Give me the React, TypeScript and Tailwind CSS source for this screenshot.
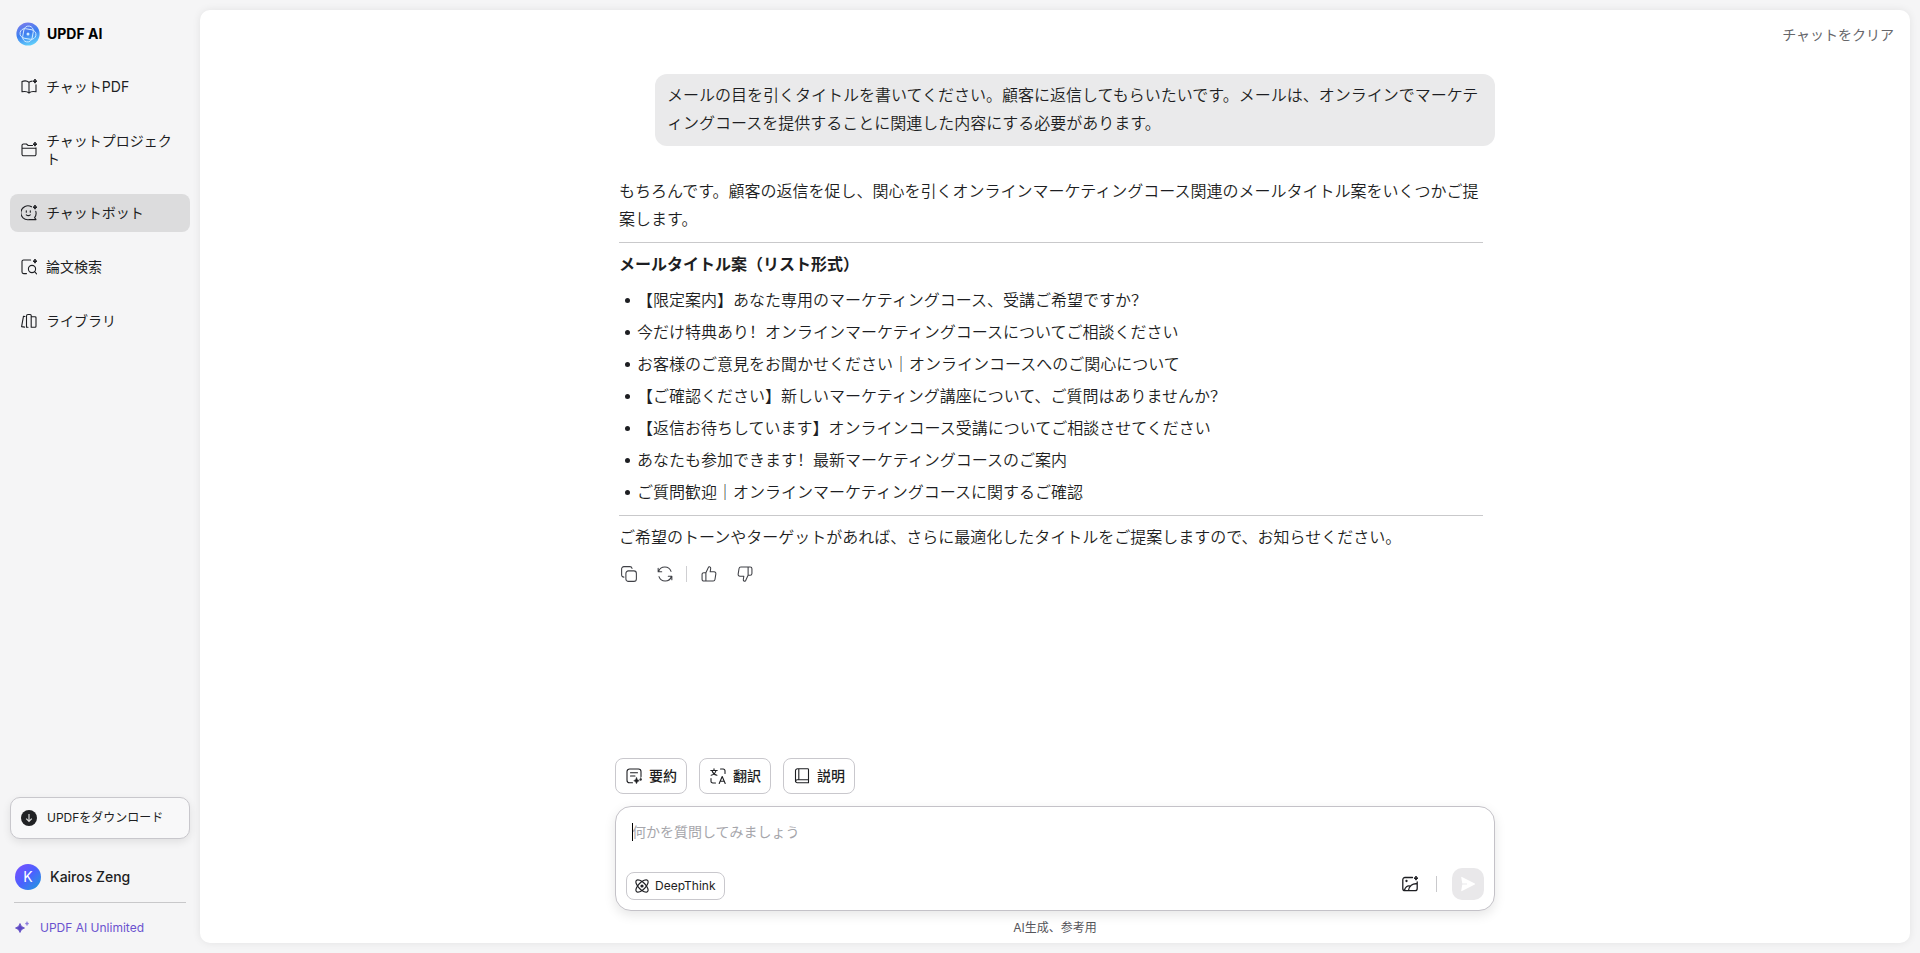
import React from "react";

type IconProps = { className?: string; children: React.ReactNode; size?: number; weight?: number };

function Icon({ className = "size-4", children, size = 16, weight = 1.1 }: IconProps) {
  return (
    <svg
      viewBox={`0 0 ${size} ${size}`}
      className={`${className} shrink-0`}
      fill="none"
      stroke="currentColor"
      strokeWidth={weight}
      strokeLinecap="round"
      strokeLinejoin="round"
      aria-hidden="true"
    >
      {children}
    </svg>
  );
}

const spark = <path d="M14 .2Q14.4 1.8 16 2.2 14.4 2.6 14 4.2 13.6 2.6 12 2.2 13.6 1.8 14 .2Z" fill="currentColor" strokeWidth=".9" />;

function Logo() {
  return (
    <svg viewBox="0 0 24 24" className="size-6 shrink-0" fill="none" aria-hidden="true">
      <defs>
        <linearGradient id="logo" x1="6" y1="0" x2="14" y2="24" gradientUnits="userSpaceOnUse">
          <stop stopColor="#7c7cec" />
          <stop offset=".5" stopColor="#3c7ff0" />
          <stop offset="1" stopColor="#63d3fb" />
        </linearGradient>
      </defs>
      <circle cx="12" cy="12" r="11.6" fill="url(#logo)" />
      <g stroke="#d5edff" strokeWidth=".9">
        <rect x="4" y="7.2" width="16" height="9.6" rx="4.8" transform="rotate(10 12 12)" />
        <rect x="4" y="7.2" width="16" height="9.6" rx="4.8" transform="rotate(100 12 12)" />
      </g>
      <circle cx="12" cy="12" r="1.5" fill="#d5edff" />
    </svg>
  );
}

const navItems = [
  {
    label: "チャットPDF",
    icon: (
      <Icon>
        <path d="M8 3.400v10.200M8 3.400C6.300 1.900 3.300 1.700 1 2.500v10.300c2.400-.5 5.300-.4 7 1.200 1.700-1.600 4.600-1.700 7-1.200V5.800M8 3.400c.9-.8 2-1.200 3.200-1.300" />
        {spark}
      </Icon>
    ),
  },
  {
    label: "チャットプロジェクト",
    icon: (
      <Icon>
        <path d="M15 5.800v6.400a1.600 1.600 0 0 1-1.600 1.600H2.600A1.600 1.600 0 0 1 1 12.200V3.600A1.600 1.600 0 0 1 2.600 2h2.800l1.800 1.500h4.300M1 6.200h14" />
        {spark}
      </Icon>
    ),
  },
  {
    label: "チャットボット",
    active: true,
    icon: (
      <Icon>
        <path d="M10.500 1.800A7 7 0 1 0 8.300 14.600H15l-1.400-2A7 7 0 0 0 14.800 6.300" />
        <path d="M5.300 5.800v1.400M9.300 5.800v1.400M5.300 9.800q2 1.700 4 0" />
        {spark}
      </Icon>
    ),
  },
  {
    label: "論文検索",
    icon: (
      <Icon>
        <path d="M5.500 14.600H2.600A1.600 1.600 0 0 1 1 13V2.600A1.600 1.600 0 0 1 2.600 1h7" />
        <circle cx="11" cy="10" r="3.600" />
        <path d="m13.600 12.700 2 2.200" />
        {spark}
      </Icon>
    ),
  },
  {
    label: "ライブラリ",
    icon: (
      <Icon>
        <path d="M4 3.500 2.500 3.200.6 13.600l3 .5M5.500 14.200V3a1.500 1.500 0 0 1 1.500-1.500h2.200a1 1 0 0 1 1 1v11.700M5.500 14.200h1.500M10.200 3.700h3.800a1 1 0 0 1 1 1v8.500a1 1 0 0 1-1 1h-3.800Z" />
      </Icon>
    ),
  },
];

const titles = [
  "【限定案内】あなた専用のマーケティングコース、受講ご希望ですか？",
  "今だけ特典あり！オンラインマーケティングコースについてご相談ください",
  "お客様のご意見をお聞かせください｜オンラインコースへのご関心について",
  "【ご確認ください】新しいマーケティング講座について、ご質問はありませんか？",
  "【返信お待ちしています】オンラインコース受講についてご相談させてください",
  "あなたも参加できます！最新マーケティングコースのご案内",
  "ご質問歓迎｜オンラインマーケティングコースに関するご確認",
];

const quickActions = [
  {
    label: "要約",
    icon: (
      <Icon>
        <path d="M6.500 14.800H3.600A2.600 2.600 0 0 1 1 12.200V3.600A2.600 2.600 0 0 1 3.600 1h8.800A2.600 2.600 0 0 1 15 3.600v5M4.500 4.800h7M4.500 8h4.500" />
        <path d="M10.500 9.500Q11 12 13.400 12.700 11 13.300 10.500 15.800 10 13.300 7.700 12.700 10 12 10.500 9.500ZM14.800 9.700l.5 1.200 1 .4-1 .4-.5 1.200-.5-1.200-1-.4 1-.4Z" fill="currentColor" strokeWidth=".4" />
      </Icon>
    ),
  },
  {
    label: "翻訳",
    icon: (
      <Icon>
        <path d="M.8 2.500h6.400M4 .8v1.700M6 2.500C5.500 4.800 3.500 6.600 1.200 7.300M2 2.500c.6 2.300 2.600 4.100 4.900 4.800M10.500 1h2.700A1.800 1.800 0 0 1 15 2.800v2.700M1 10.500v2.700A1.800 1.800 0 0 0 2.800 15h2.700M9.200 15.500 12.200 8.500l3 7M10.200 13.300h4" />
      </Icon>
    ),
  },
  {
    label: "説明",
    icon: (
      <Icon>
        <path d="M14.500 11.800V1.600a.8.800 0 0 0-.8-.8H3.500a2 2 0 0 0-2 2v10.600M4.800.8v11M14.500 11.800v3H3.200a1.500 1.500 0 0 1 0-3Z" />
      </Icon>
    ),
  },
];

function Sidebar() {
  return (
    <aside className="flex w-50 shrink-0 flex-col px-2.5">
      <div className="flex h-[68px] items-center gap-[7px] px-1.5 text-sm font-bold text-black">
        <Logo />
        <span>UPDF AI</span>
      </div>
      <nav className="flex flex-col gap-4">
        {navItems.map((item) => (
          <a
            key={item.label}
            href="#"
            aria-current={item.active ? "page" : undefined}
            className={`flex items-center gap-[9px] rounded-lg py-2.5 pr-4 pl-[11px] text-sm leading-[18px] ${item.active ? "bg-[#dcdcdd]" : ""}`}
          >
            {item.icon}
            <span>{item.label}</span>
          </a>
        ))}
      </nav>
      <div className="mt-auto flex flex-col">
        <button
          type="button"
          className="flex h-[42px] items-center gap-2.5 rounded-[10px] border border-[#c8c7cc] bg-[#f8f8f9] px-2.5 text-xs shadow-[0_3px_8px_rgba(0,0,0,0.09)]"
        >
          <svg viewBox="0 0 16 16" className="size-4" fill="none" aria-hidden="true">
            <circle cx="8" cy="8" r="8" fill="#202124" />
            <path d="M8 4v7.200M5.200 8.600 8 11.400l2.800-2.800" stroke="#dadada" strokeWidth="1.200" />
          </svg>
          <span>UPDFをダウンロード</span>
        </button>
        <div className="mx-1 mt-[25px] flex items-center gap-[9px] border-b border-[#c8c8ca] pb-3 pl-px">
          <span className="flex size-[26px] items-center justify-center rounded-full bg-linear-to-br from-[#7a4dff] via-[#4a60ff] to-[#0b9bd8] text-sm text-white">
            K
          </span>
          <span className="text-sm font-medium">Kairos Zeng</span>
        </div>
        <a href="#" className="flex h-[50px] items-center gap-[9px] pl-[5px] text-xs text-[#6a52cf]">
          <svg viewBox="0 0 16 16" className="size-4" fill="#5d48c4" aria-hidden="true">
            <path d="M5 3.500Q5.700 7 9.500 8 5.700 9 5 12.500 4.300 9 .5 8 4.300 7 5 3.500Z" stroke="#5d48c4" strokeWidth=".8" />
            <path d="M12 1.500Q12.300 3.300 14 3.600 12.300 3.900 12 5.700 11.700 3.900 10 3.600 11.700 3.300 12 1.500Z" fill="#8a78dc" stroke="#8a78dc" strokeWidth=".4" />
          </svg>
          <span>UPDF AI Unlimited</span>
        </a>
      </div>
    </aside>
  );
}

function MessageActions() {
  return (
    <div className="mt-[15px] flex items-center pl-0.5 text-[#3f4046]">
      <button type="button" aria-label="コピー">
        <Icon size={18} weight={1.2}>
          <rect x="5.500" y="5.500" width="11.800" height="11.800" rx="2.800" />
          <path d="M3.300 12.500A2.500 2.500 0 0 1 .7 10V3.200A2.500 2.500 0 0 1 3.200.7H10a2.500 2.500 0 0 1 2.400 2" />
        </Icon>
      </button>
      <button type="button" aria-label="再生成" className="ml-5">
        <Icon size={18} weight={1.2}>
          <path d="M1.300 2.500v4h4M1.800 6.200A7.400 7.400 0 0 1 15.800 6M16.700 15.500v-4h-4M16.200 11.800A7.400 7.400 0 0 1 2.200 12" />
        </Icon>
      </button>
      <span className="ml-[13px] h-4 w-px bg-[#cfcfd2]" />
      <button type="button" aria-label="高評価" className="ml-3.5">
        <Icon size={18} weight={1.2}>
          <path d="M5.500 7.500 8 2.200C8.300 1.100 9 .7 9.700.9c1 .3 1.400 1.200 1.200 2.200L10.300 6.500h4.400a2 2 0 0 1 2 2.400l-1 6.300a2 2 0 0 1-2 1.700H3.200a2 2 0 0 1-2-2V9.500a2 2 0 0 1 2-2ZM5.500 7.500v9.400" />
        </Icon>
      </button>
      <button type="button" aria-label="低評価" className="ml-5">
        <Icon size={18} weight={1.2}>
          <path d="M12.500 10.500 10 15.800c-.3 1.100-1 1.500-1.700 1.300-1-.3-1.400-1.200-1.200-2.200l.6-3.400H3.300a2 2 0 0 1-2-2.400l1-6.300a2 2 0 0 1 2-1.700h10.500a2 2 0 0 1 2 2v5.400a2 2 0 0 1-2 2ZM12.500 10.500V1.100" />
        </Icon>
      </button>
    </div>
  );
}

function Conversation() {
  return (
    <section className="min-h-0 w-full max-w-[880px] flex-1 overflow-hidden pt-3.5 text-base leading-7 font-[350]">
      <p className="ml-10 rounded-xl bg-[#eaeaeb] px-3 pt-[7px] pb-[9px]">
        メールの目を引くタイトルを書いてください。顧客に返信してもらいたいです。メールは、オンラインでマーケティングコースを提供することに関連した内容にする必要があります。
      </p>
      <article className="mt-[31px] pr-3 pl-1">
        <p>もちろんです。顧客の返信を促し、関心を引くオンラインマーケティングコース関連のメールタイトル案をいくつかご提案します。</p>
        <hr className="mt-[9px] mb-[7px] border-[#c9c9cb]" />
        <h3 className="font-bold">メールタイトル案（リスト形式）</h3>
        <ul className="mt-1.5 mb-[7px] leading-8">
          {titles.map((title) => (
            <li key={title} className="flex items-center gap-[7px] pl-1.5 before:size-[5px] before:rounded-full before:bg-[#1d1e22]">
              {title}
            </li>
          ))}
        </ul>
        <hr className="mb-[7px] border-[#c9c9cb]" />
        <p>ご希望のトーンやターゲットがあれば、さらに最適化したタイトルをご提案しますので、お知らせください。</p>
        <MessageActions />
      </article>
    </section>
  );
}

function Composer() {
  return (
    <section className="flex w-full max-w-[880px] flex-col gap-3">
      <div className="flex gap-3">
        {quickActions.map((action) => (
          <button
            key={action.label}
            type="button"
            className="flex h-9 items-center gap-[7px] rounded-lg border border-[#c9c8cd] bg-white pr-[9px] pl-2.5 text-sm font-medium"
          >
            {action.icon}
            {action.label}
          </button>
        ))}
      </div>
      <form className="rounded-2xl border border-[#c4c2c8] bg-white px-2.5 pt-4 pb-2.5 shadow-[0_4px_12px_rgba(0,0,0,0.10)]">
        <div className="relative">
          <span className="absolute top-0 left-1.5 h-[18px] w-px bg-black" />
          <textarea
            aria-label="何かを質問してみましょう"
            placeholder="何かを質問してみましょう"
            className="block h-[45px] w-full resize-none px-1.5 text-sm leading-[18px] outline-none placeholder:text-[#a6a6ab]"
          />
        </div>
        <div className="flex items-end">
          <button type="button" className="flex h-7 items-center gap-1.5 rounded-lg border border-[#c9c8cd] px-2 text-xs">
            <Icon className="size-3.5" weight={1.3}>
              <ellipse cx="8" cy="8" rx="9" ry="4" transform="rotate(45 8 8)" />
              <ellipse cx="8" cy="8" rx="9" ry="4" transform="rotate(-45 8 8)" />
              <circle cx="8" cy="8" r="1.200" fill="currentColor" />
            </Icon>
            DeepThink
          </button>
          <div className="ml-auto flex h-8 items-center">
            <button type="button" aria-label="画像を追加">
              <Icon weight={1.3}>
                <path d="M10.500 1.500H3A2.200 2.200 0 0 0 .8 3.700v8.800A2.200 2.200 0 0 0 3 14.700h10a2.200 2.200 0 0 0 2.200-2.200V5.800M2.500 14.300C3 11 5.300 9.300 8.500 10.200M6.500 14.500C7 10 10.500 7.300 15 7.800" />
                <circle cx="4.500" cy="5" r=".5" fill="currentColor" />
                {spark}
              </Icon>
            </button>
            <span className="ml-[18px] h-4 w-px bg-[#c9c9cc]" />
            <button type="submit" aria-label="送信" disabled className="ml-[15px] flex size-8 items-center justify-center rounded-[10px] bg-[#e9e8ea]">
              <svg viewBox="0 0 16 16" className="size-4" aria-hidden="true">
                <path d="M1.200 1.200Q1.200.6 2 .9L14.800 7.400q.9.600 0 1.200L2 15.100q-.8.300-.8-.3L2.300 8.600H7V7.400H2.300Z" fill="#fff" />
              </svg>
            </button>
          </div>
        </div>
      </form>
    </section>
  );
}

export default function App() {
  return (
    <div className="flex h-screen bg-[#f5f5f6] font-['Inter','Noto_Sans_CJK_SC',sans-serif] text-[#1d1e22]">
      <Sidebar />
      <main className="my-2.5 mr-2.5 flex min-w-0 flex-1 flex-col items-center rounded-[10px] bg-white shadow-[0_0_8px_rgba(0,0,0,0.08)]">
        <header className="flex h-[50px] w-full shrink-0 items-center justify-end px-4">
          <button type="button" className="text-sm text-[#66666a]">
            チャットをクリア
          </button>
        </header>
        <Conversation />
        <Composer />
        <footer className="flex h-8 shrink-0 items-center pt-0.5 text-xs text-[#55555a]">AI生成、参考用</footer>
      </main>
    </div>
  );
}
